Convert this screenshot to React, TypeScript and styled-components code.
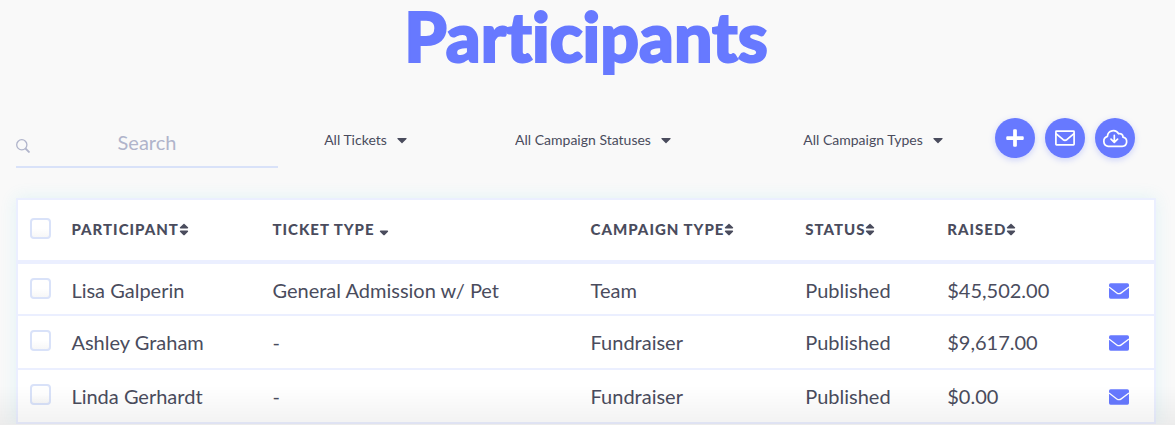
import React from "react";
import styled, { createGlobalStyle } from "styled-components";
import { FaSort, FaSortDown, FaCaretDown, FaPlus } from "react-icons/fa";

const GlobalStyle = createGlobalStyle`
  *, *::before, *::after { box-sizing: border-box; }
  body {
    margin: 0;
    background: #f9f9f9;
    color: #4a4c5d;
    font-family: Lato, "Liberation Sans", sans-serif;
    font-size: 20px;
  }
`;

const Page = styled.main`
  padding: 0 19px 0 16px;
`;

const Title = styled.h1`
  margin: 0;
  color: #6779ff;
  font-size: 68px;
  font-weight: 900;
  font-variant-ligatures: none;
  line-height: 72px;
  -webkit-text-stroke: 2px #6779ff;
  text-align: center;
`;

const Toolbar = styled.form`
  display: grid;
  grid-template-columns: 280fr 139fr 316fr 244fr 161fr;
  align-items: start;
  padding-top: 46px;
`;

const SearchField = styled.label`
  display: flex;
  align-items: center;
  min-width: 0;
  height: 50px;
  margin-right: 18px;
  border-bottom: 2px solid #d9e2f9;
  color: #b0b4cb;
`;

const SearchIcon = styled.svg`
  flex: none;
  width: 14px;
  height: 14px;
  margin-top: 8px;
`;

const SearchInput = styled.input`
  flex: 1;
  width: 0;
  min-width: 0;
  height: 48px;
  padding: 0 14px 0 0;
  border: 0;
  outline: 0;
  background: transparent;
  color: inherit;
  font: inherit;
  text-align: center;
  &::placeholder { color: #b0b4cb; opacity: 1; }
`;

const Filter = styled.label`
  display: flex;
  align-items: center;
  justify-content: center;
  gap: 10px;
  height: 44px;
`;

const FilterSelect = styled.select`
  appearance: none;
  field-sizing: content;
  padding: 0;
  border: 0;
  outline: 0;
  background: transparent;
  color: inherit;
  font-family: inherit;
  font-size: 14px;
  line-height: 20px;
`;

const FilterCaret = styled(FaCaretDown)`
  width: 10px;
  height: 16px;
  pointer-events: none;
`;

const Actions = styled.div`
  display: flex;
  gap: 10px;
`;

const RoundButton = styled.button`
  display: grid;
  place-items: center;
  width: 40px;
  height: 40px;
  padding: 0;
  border: 0;
  border-radius: 50%;
  background: #6779ff;
  color: #fff;
  box-shadow: 0 2px 6px rgba(103, 121, 255, 0.3);
  cursor: pointer;
`;

const Table = styled.table`
  width: 100%;
  margin-top: 30px;
  border: 2px solid #ebefff;
  border-spacing: 0;
  table-layout: fixed;
  background: #fff;
  box-shadow: 0 0 16px rgba(50, 200, 220, 0.12);
`;

const Col = styled.col<{ $share: number }>`
  width: ${(p) => p.$share}%;
`;

const HeadCell = styled.th`
  height: 64px;
  padding: 18px 0 0;
  border-bottom: 4px solid #ebefff;
  line-height: 24px;
  text-align: left;
  vertical-align: top;
`;

const SortButton = styled.button`
  display: flex;
  align-items: center;
  height: 22px;
  padding: 0;
  border: 0;
  background: none;
  color: inherit;
  font-family: inherit;
  font-size: 15px;
  font-weight: 900;
  line-height: 22px;
  letter-spacing: 1px;
  text-transform: uppercase;
  white-space: nowrap;
  cursor: pointer;
`;

const SortMark = styled.svg<{ $active?: boolean }>`
  width: 10px;
  height: 15px;
  margin-left: ${(p) => (p.$active ? 4 : 0)}px;
`;

const Cell = styled.td<{ $last?: boolean }>`
  height: ${(p) => (p.$last ? 52 : 54)}px;
  padding: 14px 0 0;
  border-bottom: ${(p) => (p.$last ? "0" : "2px solid #ebefff")};
  line-height: 24px;
  white-space: nowrap;
  vertical-align: top;
  tr:first-child > & { height: 52px; }
`;

const Tick = styled.input`
  appearance: none;
  display: block;
  width: 21px;
  height: 21px;
  margin: 0 0 0 12px;
  border: 2px solid #d9e2f9;
  border-radius: 4px;
  background: linear-gradient(#fff 50%, #f7f7f7);
  &:checked { background: #6779ff; }
`;

const MailButton = styled.button`
  display: block;
  padding: 5px 0 0;
  border: 0;
  background: none;
  color: #6779ff;
  cursor: pointer;
  svg { display: block; }
`;

const BottomFade = styled.div`
  position: fixed;
  inset: auto 0 0;
  height: 40px;
  background: linear-gradient(rgba(0, 0, 0, 0), rgba(0, 0, 0, 0.05));
  pointer-events: none;
`;

const filters = [
  { label: "Tickets", options: ["All Tickets", "General Admission w/ Pet"] },
  { label: "Campaign statuses", options: ["All Campaign Statuses", "Published"] },
  { label: "Campaign types", options: ["All Campaign Types", "Team", "Fundraiser"] },
];

const shares = [4.7, 17.7, 28, 18.9, 12.5, 14.2, 4];
const columns = ["Participant", "Ticket type", "Campaign type", "Status", "Raised"];
const sortedColumn = "Ticket type";

const people = [
  { name: "Lisa Galperin", ticket: "General Admission w/ Pet", type: "Team", status: "Published", raised: "$45,502.00" },
  { name: "Ashley Graham", ticket: "-", type: "Fundraiser", status: "Published", raised: "$9,617.00" },
  { name: "Linda Gerhardt", ticket: "-", type: "Fundraiser", status: "Published", raised: "$0.00" },
];

const MailSolid = () => (
  <svg width="20" height="16" viewBox="0 0 20 16" fill="none">
    <rect y="0.3" width="20" height="15.4" rx="1.6" fill="currentColor" />
    <path d="M0 4 7.8 9.9Q10 11.5 12.2 9.9L20 4" stroke="#fff" strokeWidth="1.3" />
  </svg>
);

const MailOutline = () => (
  <svg width="20" height="16" viewBox="0 0 20 16" fill="none" stroke="currentColor" strokeWidth="1.7" strokeLinejoin="round">
    <rect x="0.9" y="1.2" width="18.2" height="13.6" rx="0.6" />
    <path d="M1 3.6 8.2 9.7Q10 11 11.8 9.7L19 3.6" />
  </svg>
);

const CloudDownload = () => (
  <svg width="26" height="20" viewBox="0 0 26 20" fill="none" stroke="currentColor" strokeWidth="1.7" strokeLinecap="round" strokeLinejoin="round">
    <path d="M6.1 18.3H20.2A4.6 4.6 0 0 0 21 9.2C21.2 6.6 18.8 5 16.6 5.8A6 6 0 0 0 5.4 8.4A5.1 5.1 0 0 0 6.1 18.3Z" />
    <path d="M12.3 7.4V14M9 11.2 12.3 14.4 15.6 11.2" />
  </svg>
);

export default function App() {
  return (
    <>
      <GlobalStyle />
      <Page>
        <Title>Participants</Title>
        <Toolbar onSubmit={(e) => e.preventDefault()}>
          <SearchField>
            <SearchIcon viewBox="0 0 14 14" fill="none" stroke="currentColor" strokeWidth="1.3" aria-hidden>
              <circle cx="5.8" cy="5.8" r="5.1" />
              <path d="M9.5 9.5 13.5 13.5" strokeWidth="1.8" />
            </SearchIcon>
            <SearchInput type="text" placeholder="Search" aria-label="Search" />
          </SearchField>
          {filters.map((f) => (
            <Filter key={f.label}>
              <FilterSelect aria-label={f.label}>
                {f.options.map((o) => (
                  <option key={o}>{o}</option>
                ))}
              </FilterSelect>
              <FilterCaret />
            </Filter>
          ))}
          <Actions>
            <RoundButton type="button" aria-label="Add participant"><FaPlus size={20} /></RoundButton>
            <RoundButton type="button" aria-label="Email participants"><MailOutline /></RoundButton>
            <RoundButton type="button" aria-label="Download list"><CloudDownload /></RoundButton>
          </Actions>
        </Toolbar>
        <Table>
          <colgroup>
            {shares.map((s, i) => (
              <Col key={i} $share={s} />
            ))}
          </colgroup>
          <thead>
            <tr>
              <HeadCell><Tick type="checkbox" aria-label="Select all" /></HeadCell>
              {columns.map((c) => (
                <HeadCell key={c} scope="col">
                  <SortButton type="button">
                    {c}
                    <SortMark as={c === sortedColumn ? FaSortDown : FaSort} $active={c === sortedColumn} />
                  </SortButton>
                </HeadCell>
              ))}
              <HeadCell />
            </tr>
          </thead>
          <tbody>
            {people.map((p, i) => {
              const last = i === people.length - 1;
              return (
                <tr key={p.name}>
                  <Cell $last={last}><Tick type="checkbox" aria-label={`Select ${p.name}`} /></Cell>
                  <Cell $last={last}>{p.name}</Cell>
                  <Cell $last={last}>{p.ticket}</Cell>
                  <Cell $last={last}>{p.type}</Cell>
                  <Cell $last={last}>{p.status}</Cell>
                  <Cell $last={last}>{p.raised}</Cell>
                  <Cell $last={last}><MailButton type="button" aria-label={`Email ${p.name}`}><MailSolid /></MailButton></Cell>
                </tr>
              );
            })}
          </tbody>
        </Table>
      </Page>
      <BottomFade />
    </>
  );
}
